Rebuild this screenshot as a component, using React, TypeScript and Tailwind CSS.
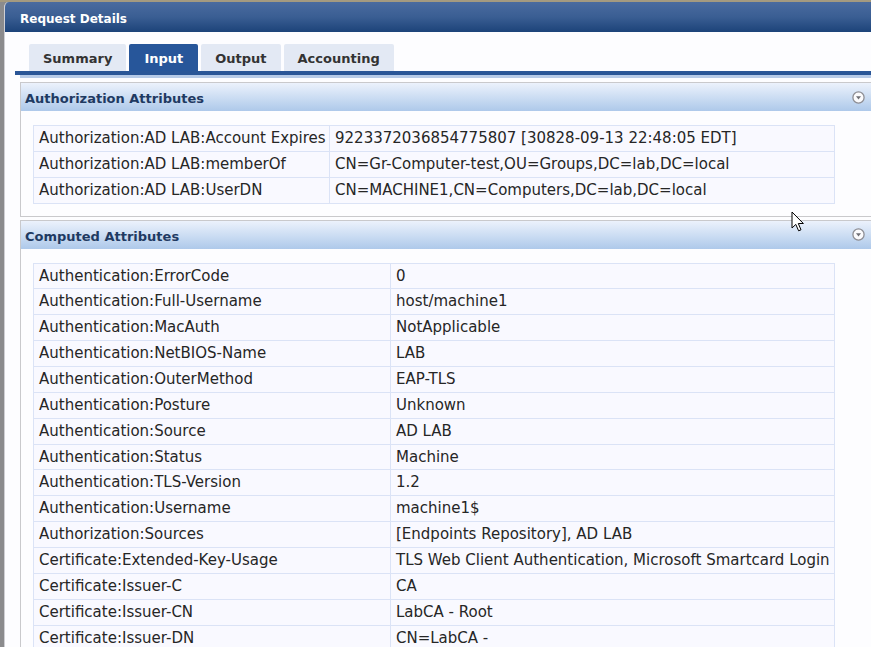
import { ReactNode } from 'react'

// ---------------------------------------------------------------------------
// Data
// ---------------------------------------------------------------------------

const authorizationRows: [string, string][] = [
  ['Authorization:AD LAB:Account Expires', '9223372036854775807 [30828-09-13 22:48:05 EDT]'],
  ['Authorization:AD LAB:memberOf', 'CN=Gr-Computer-test,OU=Groups,DC=lab,DC=local'],
  ['Authorization:AD LAB:UserDN', 'CN=MACHINE1,CN=Computers,DC=lab,DC=local'],
]

const computedRows: [string, string][] = [
  ['Authentication:ErrorCode', '0'],
  ['Authentication:Full-Username', 'host/machine1'],
  ['Authentication:MacAuth', 'NotApplicable'],
  ['Authentication:NetBIOS-Name', 'LAB'],
  ['Authentication:OuterMethod', 'EAP-TLS'],
  ['Authentication:Posture', 'Unknown'],
  ['Authentication:Source', 'AD LAB'],
  ['Authentication:Status', 'Machine'],
  ['Authentication:TLS-Version', '1.2'],
  ['Authentication:Username', 'machine1$'],
  ['Authorization:Sources', '[Endpoints Repository], AD LAB'],
  ['Certificate:Extended-Key-Usage', 'TLS Web Client Authentication, Microsoft Smartcard Login'],
  ['Certificate:Issuer-C', 'CA'],
  ['Certificate:Issuer-CN', 'LabCA - Root'],
  ['Certificate:Issuer-DN', 'CN=LabCA -'],
]

const tabs = ['Summary', 'Input', 'Output', 'Accounting']

// ---------------------------------------------------------------------------
// Pieces
// ---------------------------------------------------------------------------

function CollapseIcon() {
  return (
    <svg width="13" height="13" viewBox="0 0 13 13">
      <circle cx="6.5" cy="6.5" r="5.6" fill="#fbfbfd" stroke="#8e8e94" strokeWidth="1.3" />
      <path d="M4 5.3 L9 5.3 L6.5 8.4 Z" fill="#6e6e74" />
    </svg>
  )
}

function Section({ title, children }: { title: string; children: ReactNode }) {
  return (
    <section className="border border-[#c9c9cc] bg-[#fdfdff]">
      <div className="flex h-[28px] items-center justify-between bg-gradient-to-b from-[#ecf2fc] to-[#aec9ea] pl-[4px] pr-[18px]">
        <span className="pt-[4px] text-[13px] font-bold text-[#1f3a62]">{title}</span>
        <CollapseIcon />
      </div>
      <div className="pb-[12px] pl-[12px] pt-[14px]">{children}</div>
    </section>
  )
}

function AttrTable({ rows, keyWidth }: { rows: [string, string][]; keyWidth: string }) {
  return (
    <table className="w-[802px] table-fixed border-collapse text-[15px] text-[#262626]">
      <colgroup>
        <col className={keyWidth} />
        <col />
      </colgroup>
      <tbody>
        {rows.map(([k, v]) => (
          <tr key={k}>
            <td className="whitespace-nowrap border border-[#dbe3f6] bg-[#f9f9ff] px-[5px] py-[3px] leading-[18.86px]">
              {k}
            </td>
            <td className="whitespace-nowrap border border-[#dbe3f6] bg-[#f9f9ff] px-[5px] py-[3px] leading-[18.86px]">
              {v}
            </td>
          </tr>
        ))}
      </tbody>
    </table>
  )
}

function Cursor() {
  return (
    <svg className="absolute left-[791px] top-[211px]" width="14" height="22" viewBox="0 0 14 22">
      <path
        d="M1 1 L1 17 L4.8 13.4 L7.6 19.8 L10 18.8 L7.3 12.5 L12.4 12.5 Z"
        fill="#ffffff"
        stroke="#000000"
        strokeWidth="1"
        strokeLinejoin="round"
      />
    </svg>
  )
}

// ---------------------------------------------------------------------------
// App
// ---------------------------------------------------------------------------

export default function App() {
  return (
    <div
      className="relative h-[647px] w-[871px] overflow-hidden bg-[#8b8b8d]"
      style={{ fontFamily: '"DejaVu Sans", Verdana, sans-serif' }}
    >
      <div className="h-[2px] bg-[#a49a80]" />
      <div className="ml-[4px] w-[880px] overflow-hidden rounded-tl-[5px] border-l border-[#cfcfd4] bg-[#fdfdff]">
        {/* Title bar */}
        <div className="flex h-[30px] items-center bg-gradient-to-b from-[#4a6b9f] via-[#3a5e93] to-[#1c4379] pl-[15px] pt-[4px]">
          <span className="text-[12px] font-bold text-white">Request Details</span>
        </div>

        <div className="pl-[10px] pt-[12px]">
          {/* Tabs */}
          <div className="flex gap-[3px] pl-[14px]">
            {tabs.map((t) => (
              <div
                key={t}
                className={
                  t === 'Input'
                    ? 'flex h-[27px] items-center rounded-t-[2px] bg-[#27569a] px-[15px] pt-[2px] text-[13px] font-bold text-white'
                    : 'flex h-[27px] items-center rounded-t-[2px] bg-[#e3e9f4] px-[14px] pt-[2px] text-[13px] font-bold text-[#333]'
                }
              >
                {t}
              </div>
            ))}
          </div>
          <div className="h-[4px] bg-[#2a5697]" />
          <div className="ml-[5px] h-[3px] bg-[#b6cae7]" />

          {/* Panels */}
          <div className="flex flex-col gap-[3px] pl-[5px] pt-[4px]">
            <Section title="Authorization Attributes">
              <AttrTable rows={authorizationRows} keyWidth="w-[296px]" />
            </Section>
            <Section title="Computed Attributes">
              <AttrTable rows={computedRows} keyWidth="w-[357px]" />
            </Section>
          </div>
        </div>
      </div>
      <Cursor />
    </div>
  )
}
